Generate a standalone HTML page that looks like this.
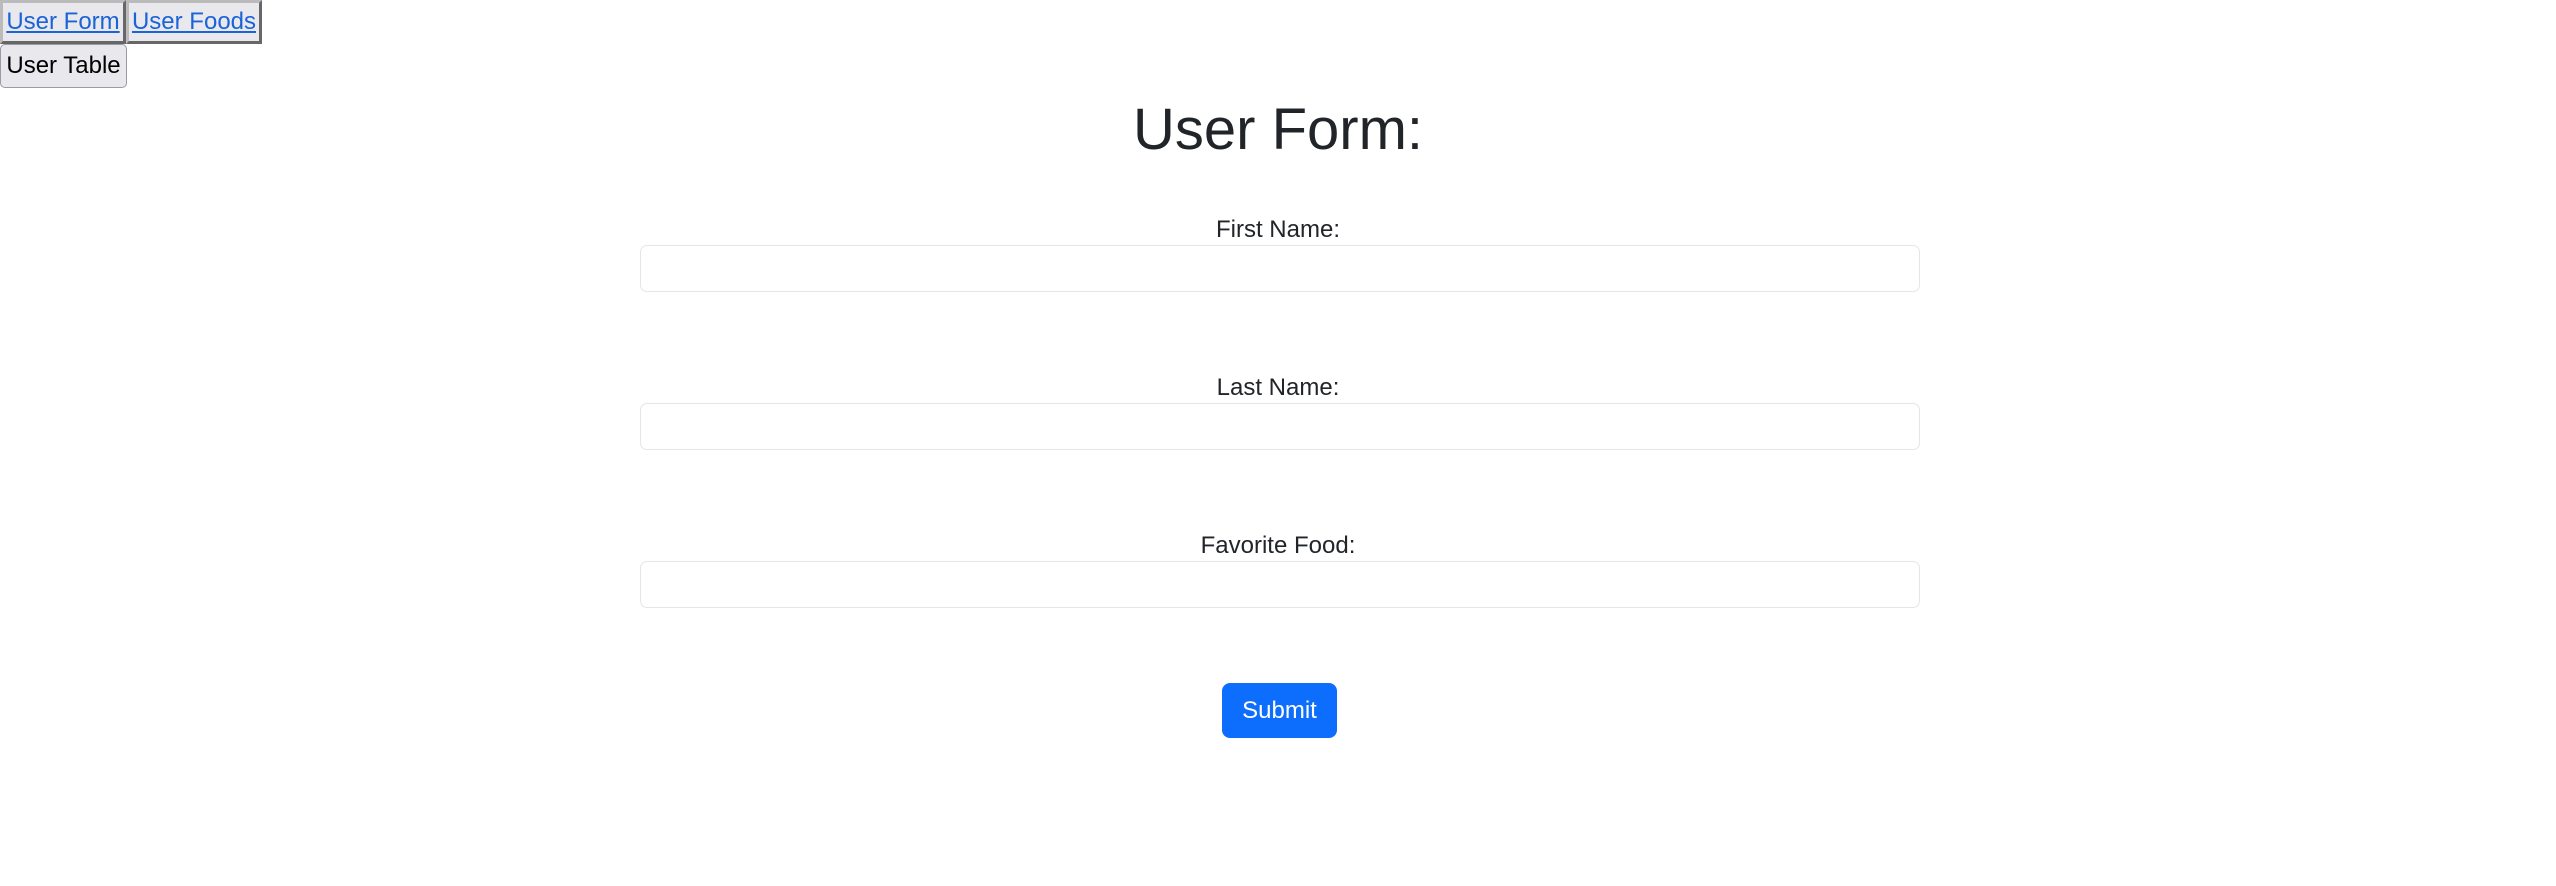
<!DOCTYPE html>
<html><head><style>
body{margin:0;width:2556px;height:886px;background:#fff;font-family:"Liberation Sans",sans-serif;position:relative;overflow:hidden;color:#212529}
.nb{position:absolute;background:#e9e9ed;box-sizing:border-box;font-size:24px;display:flex;align-items:center;justify-content:center}
.nb a{color:#1a63d8;text-decoration:underline}
.lbl{position:absolute;left:0;width:2556px;text-align:center;font-size:24px}
.inp{position:absolute;left:640px;width:1280px;height:47px;box-sizing:border-box;border:1.5px solid #e3e6ea;border-radius:7px}
</style></head><body>
<div class="nb" style="left:0;top:0;width:126px;height:44px;border:3px outset #bbb"><a>User Form</a></div>
<div class="nb" style="left:126px;top:0;width:136px;height:44px;border:3px outset #bbb"><a>User Foods</a></div>
<div class="nb" style="left:0;top:44px;width:127px;height:44px;border:1.5px solid #9a9aa6;border-radius:5px;color:#000">User Table</div>
<div style="position:absolute;left:0;width:2556px;top:96px;text-align:center;font-size:58px">User Form:</div>
<div class="lbl" style="top:216px">First Name:</div>
<div class="inp" style="top:245px"></div>
<div class="lbl" style="top:374px">Last Name:</div>
<div class="inp" style="top:403px"></div>
<div class="lbl" style="top:532px">Favorite Food:</div>
<div class="inp" style="top:561px"></div>
<div style="position:absolute;left:1222px;top:683px;width:115px;height:55px;background:#0d6efd;border-radius:8px;color:#fff;font-size:24px;display:flex;align-items:center;justify-content:center">Submit</div>
</body></html>
